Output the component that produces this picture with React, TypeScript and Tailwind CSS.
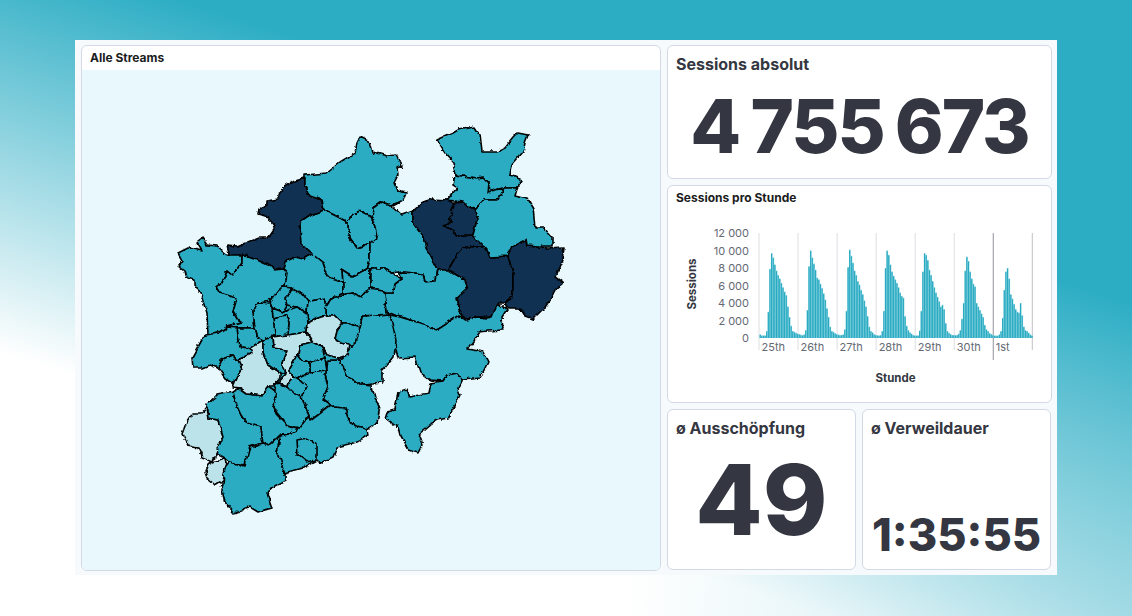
const teal = '#2cacc3';
const dark = '#113153';
const light = '#bce3ea';

// kreise, in page pixels
const regions: [string, string][] = [
  [dark, '305,178 305,187 310,196 322,200 324,210 313,214 301,222 302,245 312,254 303,259 295,257 285,262 283,268 275,269 268,265 257,260 242,255 230,256 227,245 238,246 260,237 268,237 275,227 268,217 259,214 260,209 267,206 267,201 278,199 283,188 292,182'],
  [teal, '305,178 305,175 327,173 340,162 355,153 357,143 360,137 370,142 373,152 387,156 397,155 402,166 397,168 398,175 394,183 397,190 406,192 403,200 392,206 380,203 373,208 372,217 360,211 352,215 347,222 340,218 324,210 322,200 310,196 305,187'],
  [teal, '352,215 360,211 372,217 375,228 377,237 370,243 357,248 350,238 347,228 347,222'],
  [teal, '301,222 313,214 324,210 340,218 347,222 347,228 350,238 357,248 370,243 370,260 367,270 353,277 342,270 343,282 328,277 323,263 312,254 302,245'],
  [teal, '373,208 380,203 392,206 402,215 413,211 413,223 422,235 428,252 437,270 435,281 425,282 423,274 403,272 390,274 385,268 373,268 367,270 370,260 370,243 377,237 375,228 372,217'],
  [dark, '413,211 423,202 432,199 448,200 455,203 450,217 452,222 445,227 458,235 473,235 480,240 485,247 467,247 457,255 448,270 437,270 428,252 422,235 413,223'],
  [dark, '455,203 462,202 467,207 475,210 477,220 473,235 458,235 445,227 452,222 450,217'],
  [dark, '485,247 490,257 508,256 513,273 513,297 505,303 498,303 492,317 477,317 467,320 458,307 456,298 467,288 465,280 448,270 457,255 467,247'],
  [dark, '508,256 508,252 513,246 527,239 528,245 538,246 547,248 564,247 562,260 555,277 563,283 555,290 550,300 543,310 533,320 525,317 520,308 507,308 505,303 513,297 513,273'],
  [teal, '437,140 453,133 458,130 475,127 480,135 482,152 497,152 505,148 513,138 518,133 528,135 525,143 523,152 512,165 510,175 522,180 517,188 503,188 488,192 489,183 483,177 477,178 455,175 453,162 445,153'],
  [teal, '455,175 477,178 483,177 489,183 488,192 503,188 498,200 485,200 476,209 467,207 462,202 448,200 458,188 453,185'],
  [teal, '503,188 517,188 515,195 527,198 533,208 535,227 543,227 552,237 552,246 538,246 528,245 527,239 513,246 508,256 490,257 485,247 473,235 477,220 475,210 485,200 498,200'],
  [teal, '398,273 403,272 423,274 425,282 435,281 437,270 448,270 465,280 467,288 456,298 458,307 463,315 437,330 420,323 400,317 390,313 387,313 385,293 393,293 395,285 403,279'],
  [teal, '390,315 400,317 420,323 437,330 460,315 467,320 477,317 487,318 492,317 498,303 507,310 502,318 503,330 488,331 480,332 467,349 483,352 488,362 480,378 463,380 457,373 447,375 443,381 430,380 420,372 415,357 398,358 395,345'],
  [teal, '362,317 390,315 396,340 394,357 383,370 383,383 363,385 348,378 340,360 353,348 357,337 360,328'],
  [teal, '340,360 348,378 363,385 372,386 375,398 380,405 377,423 367,429 357,427 350,423 345,408 333,407 323,400 328,387 325,375 328,360'],
  [teal, '398,393 407,390 410,397 428,393 430,383 443,381 447,375 457,373 463,380 458,390 460,395 455,405 448,418 437,420 432,423 418,435 422,445 418,453 408,450 400,435 398,427 385,418 387,412 395,410'],
  [teal, '178,253 190,247 202,250 197,242 202,238 207,245 217,246 228,255 242,255 242,262 233,275 227,270 222,283 217,287 220,293 237,298 233,312 238,320 242,323 227,327 218,333 208,335 207,313 202,297 195,285 195,280 187,278 185,270 179,265 182,260'],
  [teal, '242,255 257,260 268,265 275,269 283,268 287,273 285,287 278,293 272,300 258,302 259,310 253,312 255,325 255,328 237,328 227,327 242,323 238,320 233,312 237,298 220,293 217,287 222,283 227,270 233,275 242,262'],
  [teal, '283,268 285,262 295,257 303,259 312,254 323,263 328,277 343,282 343,292 333,297 327,307 325,298 308,302 300,292 292,288 283,287 285,287 287,273'],
  [teal, '343,282 342,270 353,277 367,270 373,268 370,272 370,288 362,297 353,293 345,294 343,292'],
  [teal, '370,272 373,268 385,268 390,274 403,279 395,285 393,293 385,293 383,290 370,288'],
  [teal, '333,297 345,294 353,293 362,297 370,288 383,290 385,293 387,313 390,315 362,317 360,328 348,323 343,323 335,315 327,315 327,307'],
  [teal, '277,293 283,287 292,288 288,295 285,298 287,305 283,312 272,308 270,303'],
  [teal, '292,288 300,292 308,302 307,313 297,307 287,305 285,298 288,295'],
  [teal, '308,302 325,298 327,307 327,315 317,318 308,323 307,313'],
  [teal, '283,312 297,307 307,313 308,323 307,332 288,335 289,322 285,315 273,318 272,308'],
  [teal, '273,318 285,315 289,322 288,335 272,337 275,335'],
  [teal, '253,312 258,302 270,303 272,308 273,318 275,335 272,337 263,340 258,338 255,328'],
  [teal, '237,328 255,328 258,338 263,340 250,348 240,347 238,337'],
  [teal, '207,335 218,333 227,327 237,328 238,337 240,347 250,348 252,353 238,360 233,355 222,360 218,368 210,365 203,368 193,368 192,358 203,338'],
  [teal, '222,360 233,355 238,360 242,368 238,375 233,383 225,378 218,368'],
  [light, '263,340 263,352 268,365 280,373 280,378 273,387 267,387 262,395 247,393 240,388 233,387 238,375 242,368 238,360 252,353 250,348'],
  [teal, '263,340 272,337 273,348 287,350 282,362 285,375 280,373 268,365 263,352'],
  [light, '272,337 288,335 307,332 312,342 300,345 298,355 288,372 293,377 287,387 278,383 285,375 282,362 287,350 273,348'],
  [light, '307,332 308,323 317,318 327,315 335,315 343,323 337,330 335,340 340,343 350,345 348,355 338,358 327,355 322,347 313,342'],
  [teal, '343,323 348,323 360,328 357,337 353,348 350,345 340,343 335,340 337,330'],
  [teal, '322,347 327,355 338,358 340,360 328,360 325,375 327,370 325,358 313,345'],
  [teal, '300,345 312,342 322,347 325,358 310,362 302,360 298,355'],
  [teal, '310,362 325,358 327,370 310,372'],
  [teal, '288,372 298,355 302,360 310,362 310,372 307,373 297,378 293,377'],
  [teal, '307,373 310,372 327,370 325,375 328,387 323,400 330,405 310,420 302,397 307,387 297,378'],
  [teal, '274,386 278,383 287,387 288,383 293,377 297,378 307,387 302,397 310,420 308,418 300,428 287,425 277,413 273,405 277,393'],
  [teal, '288,383 293,377 297,378 307,387 302,397 295,395 287,387'],
  [light, '206,408 202,413 193,413 185,425 182,433 188,445 198,447 203,458 213,462 216,453 223,437 218,420 208,418'],
  [light, '213,462 225,458 227,467 223,480 215,485 207,478 205,472 208,465'],
  [teal, '206,405 217,395 233,392 235,400 242,415 247,423 260,427 262,443 250,447 245,465 230,462 225,458 216,453 223,437 218,420 208,418'],
  [teal, '233,392 240,388 247,393 262,395 268,387 277,393 273,405 277,415 287,425 297,428 295,433 280,435 270,445 262,443 260,427 247,423 242,415 235,400'],
  [teal, '230,462 245,466 250,447 262,443 270,445 280,436 277,453 285,473 285,480 270,488 267,493 272,508 258,512 250,507 237,512 233,513 225,503 222,490 225,468'],
  [teal, '280,436 295,433 297,428 300,428 308,418 310,420 330,405 333,407 345,408 350,423 357,427 367,429 368,435 357,442 337,447 333,457 320,463 317,460 303,468 285,473 277,453'],
  [teal, '297,440 307,438 316,443 316,460 307,462 298,455'],
];

const days: number[][] = [
  [420, 300, 300, 300, 800, 3000, 7900, 9700, 9200, 8400, 7700, 7200, 6800, 6300, 5800, 5300, 4900, 3600, 2400, 1400, 800, 700, 600, 500],
  [450, 380, 320, 420, 900, 3200, 8200, 10000, 9200, 8500, 7800, 6900, 6700, 6200, 5700, 5100, 4400, 3400, 2400, 1300, 800, 700, 550, 450],
  [400, 350, 350, 420, 1000, 3100, 8100, 10100, 9400, 8600, 7700, 7200, 6500, 6100, 5500, 5000, 4300, 3600, 2500, 1300, 800, 650, 450, 350],
  [320, 300, 330, 800, 3100, 8000, 10000, 9500, 8400, 7600, 7100, 6700, 6300, 5800, 5200, 4800, 4600, 2500, 1400, 900, 650, 500, 350, 300],
  [300, 300, 850, 3100, 7600, 9700, 9500, 8900, 7800, 7200, 6500, 5800, 5200, 4700, 4200, 3600, 3800, 3300, 1700, 800, 600, 450, 350, 350],
  [330, 350, 500, 900, 2200, 4000, 7700, 9300, 8800, 7600, 6800, 6200, 5900, 4000, 3600, 3200, 2800, 2400, 1500, 1000, 800, 550, 450, 350],
  [300, 280, 280, 420, 800, 2300, 5500, 7600, 8000, 6800, 5000, 4500, 3900, 3300, 3000, 2900, 4000, 2600, 1300, 900, 800, 600, 400, 300],
];

const yTicks = [0, 2000, 4000, 6000, 8000, 10000, 12000];
const xTicks = ['25th', '26th', '27th', '28th', '29th', '30th', '1st'];

function SessionsChart() {
  const x0 = 91;
  const step = 39.05;
  const base = 128;
  const scale = 105 / 12000;
  return (
    <svg width="383" height="155" viewBox="0 0 383 155" className="block shrink-0">
      {xTicks.map((t, i) => (
        <line key={t} x1={x0 + i * step} x2={x0 + i * step} y1={23} y2={i === 6 ? 150 : 140} stroke={i === 6 ? '#a3a5ab' : '#dcdee2'} strokeWidth={i === 6 ? 1.2 : 1} />
      ))}
      <line x1={x0 + 7 * step} x2={x0 + 7 * step} y1={23} y2={140} stroke="#c9cbcf" strokeWidth={1.2} />
      {days.map((day, d) =>
        day.map((v, h) => {
          const x = x0 + 0.5 + (d + h / 24) * step;
          return (
            <g key={`${d}-${h}`}>
              <rect x={x} y={base - v * scale} width={1.63} height={v * scale} fill="#7ccfdd" />
              <rect x={x + 0.15} y={base - v * scale + 0.6} width={1.1} height={v * scale - 0.6} fill="#28a9c1" />
            </g>
          );
        })
      )}
      {yTicks.map((t) => (
        <text key={t} x={81} y={base - t * scale + 4} textAnchor="end" fontSize="11" fill="#646873">
          {t === 0 ? '0' : t.toLocaleString('en-US').replace(',', ' ')}
        </text>
      ))}
      {xTicks.map((t, i) => (
        <text key={t} x={x0 + i * step + 2.5} y={140.5} fontSize="11" fill="#646873">
          {t}
        </text>
      ))}
      <text transform="translate(28 74) rotate(-90)" textAnchor="middle" fontSize="11.5" fontWeight="700" fill="#343741">
        Sessions
      </text>
    </svg>
  );
}

function NrwMap() {
  return (
    <svg width="578" height="500" viewBox="82 70 578 500" className="block">
      <defs>
        <filter id="rough" x="-5%" y="-5%" width="110%" height="110%" colorInterpolationFilters="sRGB">
          <feTurbulence type="fractalNoise" baseFrequency="0.09" numOctaves="2" seed="7" result="wide" />
          <feDisplacementMap in="SourceGraphic" in2="wide" scale="5" xChannelSelector="R" yChannelSelector="G" result="bent" />
          <feTurbulence type="fractalNoise" baseFrequency="0.34" numOctaves="2" seed="4" result="fine" />
          <feDisplacementMap in="bent" in2="fine" scale="2.4" xChannelSelector="R" yChannelSelector="G" />
        </filter>
      </defs>
      <g filter="url(#rough)">
        <polygon fill={teal} points="245,265 340,265 400,320 395,355 370,385 375,420 330,450 240,450 220,410 240,392 215,350 225,300" />
        {regions.map(([fill, points], i) => (
          <polygon key={i} fill={fill} points={points} stroke="#000" strokeWidth="1.6" strokeLinejoin="round" />
        ))}
      </g>
    </svg>
  );
}

export default function App() {
  return (
    <div
      className="w-[1132px] h-[616px] overflow-hidden pt-[40px] pl-[75px] text-[#343741] bg-[radial-gradient(ellipse_45%_60%_at_100%_100%,rgba(44,172,195,0.27),rgba(44,172,195,0)),linear-gradient(197.7deg,#2cadc4_31%,#ffffff_73%)]"
      style={{ fontFamily: 'Inter, "Noto Sans", sans-serif' }}
    >
      <div className="w-[982px] h-[535px] bg-[#f6fafd] pl-[6px] pt-[5px] flex gap-[6px]">
        {/* Map */}
        <div className="w-[580px] h-[526px] bg-white border border-[#d3dae6] rounded-[6px] overflow-hidden flex flex-col">
          <div className="h-[24px] shrink-0 pl-[8px] flex items-center text-[12px] font-bold text-[#1a1c21]">Alle Streams</div>
          <div className="flex-1 bg-[#e8f8fc]">
            <NrwMap />
          </div>
        </div>

        <div className="w-[385px] flex flex-col gap-[6px]">
          {/* Sessions absolut */}
          <div className="h-[134px] bg-white border border-[#d3dae6] rounded-[6px] px-[8px] pt-[8px] flex flex-col">
            <div className="text-[16px] leading-[20px] font-bold">Sessions absolut</div>
            <div className="flex-1 flex items-center justify-center text-[74px] leading-none font-extrabold tracking-[-2px] [word-spacing:-3px] whitespace-nowrap">4 755 673</div>
          </div>

          {/* Sessions pro Stunde */}
          <div className="h-[218px] bg-white border border-[#d3dae6] rounded-[6px] flex flex-col">
            <div className="h-[24px] shrink-0 pl-[8px] flex items-center text-[12px] font-bold text-[#1a1c21]">Sessions pro Stunde</div>
            <SessionsChart />
            <div className="text-center pl-[72px] text-[11.5px] leading-[14px] font-bold mt-[6px]">Stunde</div>
          </div>

          {/* Averages */}
          <div className="flex gap-[6px] h-[161px]">
            <div className="w-[189px] bg-white border border-[#d3dae6] rounded-[6px] px-[8px] pt-[8px] flex flex-col">
              <div className="text-[16px] leading-[20px] font-bold">ø Ausschöpfung</div>
              <div className="flex-1 flex items-center justify-center text-[98px] leading-none font-extrabold pb-[7px]">49</div>
            </div>
            <div className="w-[189px] bg-white border border-[#d3dae6] rounded-[6px] px-[8px] pt-[8px] flex flex-col">
              <div className="text-[16px] leading-[20px] font-bold">ø Verweildauer</div>
              <div className="flex-1 flex items-end justify-center text-[45px] leading-none font-extrabold pb-[12px]">1:35:55</div>
            </div>
          </div>
        </div>
      </div>
    </div>
  );
}
